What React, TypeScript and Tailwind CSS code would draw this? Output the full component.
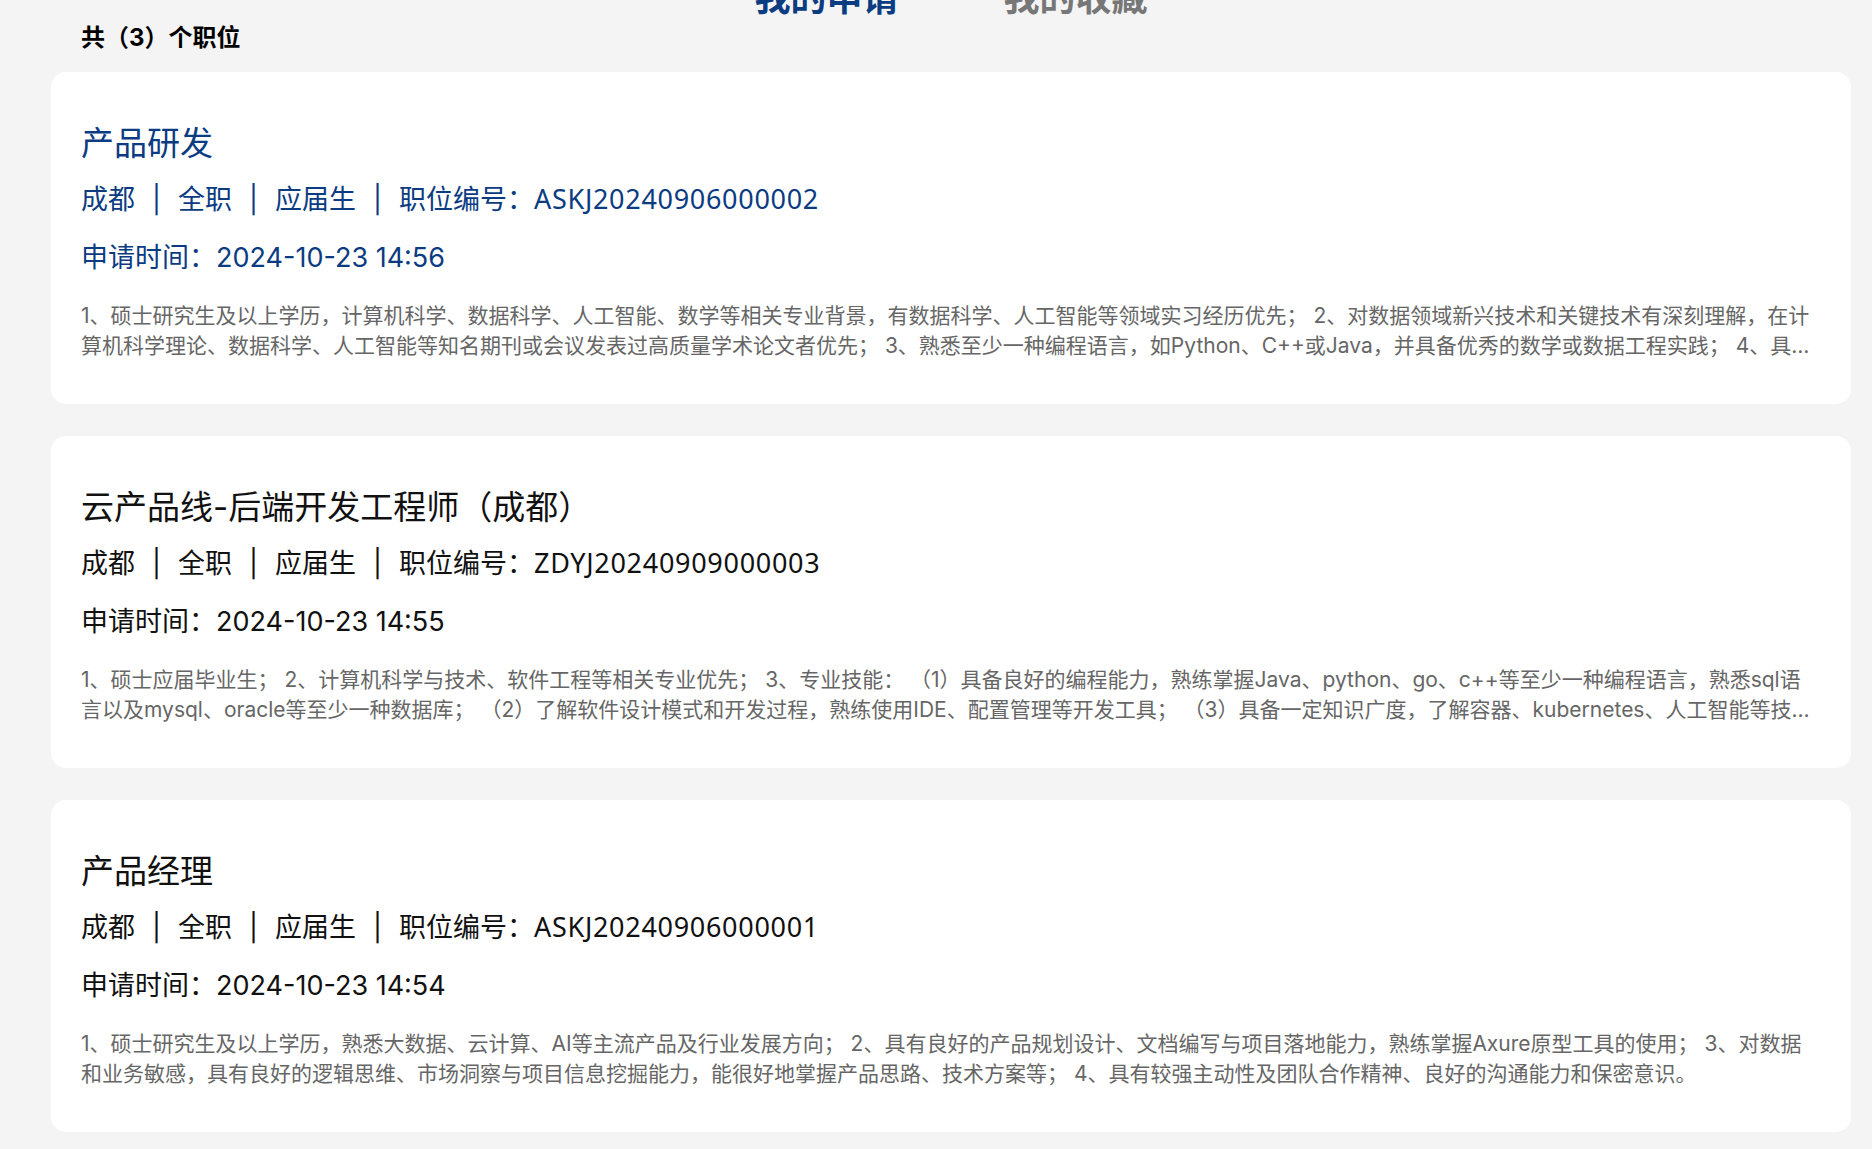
import React from 'react';

type Job = {
  id: string;
  title: string;
  code: string;
  appliedAt: string;
  desc: string;
};

const jobs: Job[] = [
  {
    id: '1',
    title: '产品研发',
    code: 'ASKJ20240906000002',
    appliedAt: '2024-10-23 14:56',
    desc: '1、硕士研究生及以上学历，计算机科学、数据科学、人工智能、数学等相关专业背景，有数据科学、人工智能等领域实习经历优先； 2、对数据领域新兴技术和关键技术有深刻理解，在计算机科学理论、数据科学、人工智能等知名期刊或会议发表过高质量学术论文者优先； 3、熟悉至少一种编程语言，如Python、C++或Java，并具备优秀的数学或数据工程实践； 4、具备良好的沟通能力和团队合作精神，能够独立开展研究工作。',
  },
  {
    id: '2',
    title: '云产品线-后端开发工程师（成都）',
    code: 'ZDYJ20240909000003',
    appliedAt: '2024-10-23 14:55',
    desc: '1、硕士应届毕业生； 2、计算机科学与技术、软件工程等相关专业优先； 3、专业技能： （1）具备良好的编程能力，熟练掌握Java、python、go、c++等至少一种编程语言，熟悉sql语言以及mysql、oracle等至少一种数据库； （2）了解软件设计模式和开发过程，熟练使用IDE、配置管理等开发工具； （3）具备一定知识广度，了解容器、kubernetes、人工智能等技术者优先。',
  },
  {
    id: '3',
    title: '产品经理',
    code: 'ASKJ20240906000001',
    appliedAt: '2024-10-23 14:54',
    desc: '1、硕士研究生及以上学历，熟悉大数据、云计算、AI等主流产品及行业发展方向； 2、具有良好的产品规划设计、文档编写与项目落地能力，熟练掌握Axure原型工具的使用； 3、对数据和业务敏感，具有良好的逻辑思维、市场洞察与项目信息挖掘能力，能很好地掌握产品思路、技术方案等； 4、具有较强主动性及团队合作精神、良好的沟通能力和保密意识。',
  },
];

const Sep = () => <span className="inline-block w-[43px] text-center">|</span>;

const JobCard = ({ job, active }: { job: Job; active: boolean }) => {
  const tone = active ? 'text-[#0b3c82]' : 'text-[#111111]';
  return (
    <div className="bg-white rounded-[15px] px-[30px] pt-[47px] pb-[43px]">
      <h3 className={`text-[33px] leading-[48px] ${tone}`}>{job.title}</h3>
      <div className={`mt-[13px] h-[40px] overflow-hidden text-[27px] leading-[40px] whitespace-nowrap ${tone}`}>
        成都<Sep />全职<Sep />应届生<Sep />职位编号：
        <span className="font-['Noto_Sans',sans-serif] tracking-[0.7px] leading-none">{job.code}</span>
      </div>
      <div className={`mt-[18px] text-[27px] leading-[40px] ${tone}`}>申请时间：{job.appliedAt}</div>
      <p className="mt-[23px] text-[21px] leading-[30px] text-[#666666] line-clamp-2">{job.desc}</p>
    </div>
  );
};

export default function App() {
  return (
    <div className="min-h-screen bg-[#f4f4f4] flex flex-col font-['Inter','Noto_Sans_CJK_SC',sans-serif] pl-[51px] pr-[21px]">
      {/* tabs (page is scrolled, only the bottom of them shows) */}
      <div className="-mt-[20px] flex justify-center gap-[105px] text-[36px] leading-[36px] font-bold">
        <span className="text-[#0b3c82]">我的申请</span>
        <span className="text-[#777777]">我的收藏</span>
      </div>

      <div className="mt-[6px] pl-[30px] text-[24px] leading-[32px] font-bold text-black">共（3）个职位</div>

      <div className="mt-[18px] flex flex-col gap-[32px] pb-[40px]">
        {jobs.map((job, i) => (
          <JobCard key={job.id} job={job} active={i === 0} />
        ))}
      </div>
    </div>
  );
}
